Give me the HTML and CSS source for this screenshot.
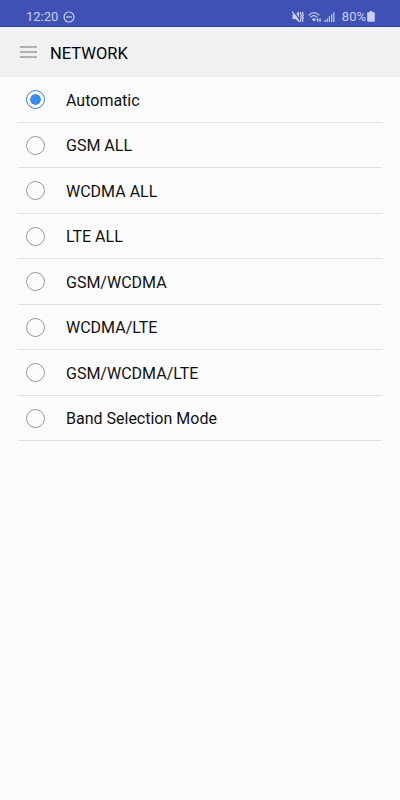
FILE: index.html
```html
<!DOCTYPE html>
<html lang="en">
<head>
    <meta charset="UTF-8">
    <meta name="viewport" content="width=device-width, initial-scale=1.0">
    <title>Network</title>
    <link rel="stylesheet" href="styles.css">
</head>
<body>
    <div class="status-bar">
        <span class="clock">12:20</span>
        <svg class="dnd" width="12" height="12" viewBox="0 0 12 12">
            <circle cx="6" cy="6" r="5" />
            <path d="M3 6h6" />
        </svg>
        <div class="status-icons">
            <svg class="mute" width="12" height="12" viewBox="0 0 12 12">
                <path class="fill" d="M.5 3.500h2.800L7 .5v10.500L3.300 8H.5z" />
                <path class="slash" d="M1.800.2l6 8.600" />
                <path d="M.3.500l7 10.500" />
                <path class="vibration" d="M8.500 1v2.300l1 1.200-1 1.500 1 1.500-1 1.200V11M10.600 1v1.600l.7 1.400-.7 1.500.7 1.500-.7 1.500V11" />
            </svg>
            <svg class="wifi" width="14" height="12" viewBox="0 0 14 12">
                <path d="M.7 4.300Q6 -1 11.300 4.300M2.500 6.300Q6 3 9.300 6.200" />
                <path class="fill" d="M3.800 8.300Q6 6.300 8 8.300L6 10.600zM8 8.800L9.500 7 11 8.800h-1v2.200H9V8.800zM10.500 9h1V7h1v2h1L12 11z" />
            </svg>
            <svg class="signal" width="11" height="12" viewBox="0 0 11 12">
                <path d="M1 9v2M3.200 7.400V11M5.400 5.300V11M7.600 3.300V11M9.800 1.200V11" />
            </svg>
            <span class="battery-text">80%</span>
            <svg class="battery" width="8" height="11" viewBox="0 0 8 11">
                <path class="fill" d="M2.500 0h3v1.200H7.200q.6 0 .6.600v8.200q0 .8-.8.800H1Q.2 10.800.2 10V1.800q0-.6.6-.6h1.700z" />
            </svg>
        </div>
    </div>

    <div class="toolbar">
        <svg class="menu-icon" width="17" height="12" viewBox="0 0 17 12">
            <path d="M0 1h17M0 6h17M0 11h17" />
        </svg>
        <h1>NETWORK</h1>
    </div>

    <div class="network-list">
        <label><input type="radio" name="mode" checked>Automatic</label>
        <label><input type="radio" name="mode">GSM ALL</label>
        <label><input type="radio" name="mode">WCDMA ALL</label>
        <label><input type="radio" name="mode">LTE ALL</label>
        <label><input type="radio" name="mode">GSM/WCDMA</label>
        <label><input type="radio" name="mode">WCDMA/LTE</label>
        <label><input type="radio" name="mode">GSM/WCDMA/LTE</label>
        <label><input type="radio" name="mode">Band Selection Mode</label>
    </div>
</body>
</html>
```
FILE: styles.css
```css
* {
    box-sizing: border-box;
}

body {
    margin: 0;
    min-height: 100vh;
    background-color: #fcfcfc;
    color: #111;
    font-family: Roboto, sans-serif;
}

/* Status bar */
.status-bar {
    display: flex;
    align-items: center;
    height: 27px;
    padding: 8px 25px 0 26px;
    background-color: #3f51b5;
    border-bottom: 1px solid #35449b;
    color: #c9d0f5;
    font-size: 13px;
    line-height: 18px;
}

.status-bar svg {
    fill: none;
    stroke: #c8cff5;
    stroke-width: 1.2;
}

.status-bar svg .fill {
    fill: #c8cff5;
    stroke: none;
}

.dnd {
    margin-left: 5px;
}

.mute .slash {
    stroke: #3f51b5;
}

.status-icons {
    display: flex;
    align-items: center;
    margin-left: auto;
}

.wifi {
    margin-left: 4px;
}

.signal {
    margin-left: 2px;
}

.battery-text {
    margin-left: 7px;
}

.battery {
    margin: 0 0 1px 1px;
}

/* Toolbar */
.toolbar {
    display: flex;
    align-items: center;
    height: 50px;
    padding: 2px 20px 0;
    background-color: #f1f1f1;
}

.menu-icon {
    margin: 0 13px 3px 0;
    fill: none;
    stroke: #999;
    stroke-width: 1.4;
}

h1 {
    margin: 0;
    font-size: 16.5px;
    font-weight: 400;
    color: #000;
}

/* Network modes */
.network-list {
    padding: 0 18px;
}

.network-list label {
    display: flex;
    align-items: center;
    height: 45.5px;
    padding: 2px 0 0 8px;
    border-bottom: 1px solid #e1e1e1;
    font-size: 16px;
}

.network-list input {
    appearance: none;
    width: 19px;
    height: 19px;
    margin: 0 21px 1px 0;
    border: 1px solid #999;
    border-radius: 50%;
}

.network-list input:checked {
    border-color: #3a82d0;
    background: radial-gradient(circle, #3b8cf0 5px, transparent 5.5px);
}
```
